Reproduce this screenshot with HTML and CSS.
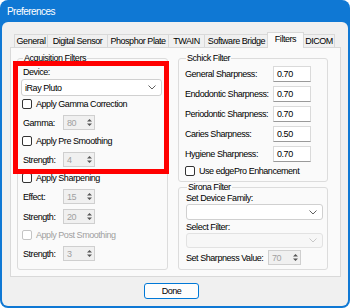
FILE: index.html
```html
<!DOCTYPE html>
<html>
<head>
<meta charset="utf-8">
<title>Preferences</title>
<link rel="stylesheet" href="styles.css">
</head>
<body>
<div class="window">
  <div class="titlebar">Preferences</div>
  <div class="client">
    <div class="tabstrip">
      <div class="tab t1">General</div>
      <div class="tab t2">Digital Sensor</div>
      <div class="tab t3">Phosphor Plate</div>
      <div class="tab t4">TWAIN</div>
      <div class="tab t5">Software Bridge</div>
      <div class="tab sel">Filters</div>
      <div class="tab t7">DICOM</div>
    </div>
    <div class="panel">
      <fieldset class="group acq">
        <legend>Acquisition Filters</legend>
        <div class="stack">
          <div class="devblock">
            <div class="lbl">Device:</div>
            <div class="combo"><span>iRay Pluto</span><svg class="chev" width="8" height="5" viewBox="0 0 8 5"><path d="M0.5 0.5L4 4 7.5 0.5" fill="none" stroke="#606060" stroke-width="1"/></svg></div>
          </div>
          <div class="chk"><span class="box"></span>Apply Gamma Correction</div>
          <div class="row"><span class="lbl rl">Gamma:</span><div class="spin"><span>80</span><svg width="9" height="13" viewBox="0 0 9 13"><path d="M2 5.5L4.5 3 7 5.5z M2 7.5L4.5 10 7 7.5z" fill="#555"/></svg></div></div>
          <div class="chk"><span class="box"></span>Apply Pre Smoothing</div>
          <div class="row"><span class="lbl rl">Strength:</span><div class="spin"><span>4</span><svg width="9" height="13" viewBox="0 0 9 13"><path d="M2 5.5L4.5 3 7 5.5z M2 7.5L4.5 10 7 7.5z" fill="#555"/></svg></div></div>
          <div class="chk"><span class="box"></span>Apply Sharpening</div>
          <div class="row"><span class="lbl rl">Effect:</span><div class="spin"><span>15</span><svg width="9" height="13" viewBox="0 0 9 13"><path d="M2 5.5L4.5 3 7 5.5z M2 7.5L4.5 10 7 7.5z" fill="#555"/></svg></div></div>
          <div class="row"><span class="lbl rl">Strength:</span><div class="spin"><span>20</span><svg width="9" height="13" viewBox="0 0 9 13"><path d="M2 5.5L4.5 3 7 5.5z M2 7.5L4.5 10 7 7.5z" fill="#555"/></svg></div></div>
          <div class="chk dis"><span class="box"></span>Apply Post Smoothing</div>
          <div class="row"><span class="lbl rl">Strength:</span><div class="spin"><span>3</span><svg width="9" height="13" viewBox="0 0 9 13"><path d="M2 5.5L4.5 3 7 5.5z M2 7.5L4.5 10 7 7.5z" fill="#555"/></svg></div></div>
        </div>
      </fieldset>
      <div class="rightcol">
        <fieldset class="group schick">
          <legend>Schick Filter</legend>
          <div class="sstack">
            <div class="trow"><span class="tl">General Sharpness:</span><span class="tb">0.70</span></div>
            <div class="trow"><span class="tl">Endodontic Sharpness:</span><span class="tb">0.70</span></div>
            <div class="trow"><span class="tl">Periodontic Sharpness:</span><span class="tb">0.70</span></div>
            <div class="trow"><span class="tl">Caries Sharpness:</span><span class="tb">0.50</span></div>
            <div class="trow"><span class="tl">Hygiene Sharpness:</span><span class="tb">0.70</span></div>
            <div class="chk edge"><span class="box"></span>Use edgePro Enhancement</div>
          </div>
        </fieldset>
        <fieldset class="group sirona">
          <legend>Sirona Filter</legend>
          <div class="slbl">Set Device Family:</div>
          <div class="combo wide"><span></span><svg class="chev" width="8" height="5" viewBox="0 0 8 5"><path d="M0.5 0.5L4 4 7.5 0.5" fill="none" stroke="#606060" stroke-width="1"/></svg></div>
          <div class="slbl gap">Select Filter:</div>
          <div class="combo wide off"><span></span><svg class="chev" width="8" height="5" viewBox="0 0 8 5"><path d="M0.5 0.5L4 4 7.5 0.5" fill="none" stroke="#c8c8c8" stroke-width="1"/></svg></div>
          <div class="row srow"><span class="lbl sl">Set Sharpness Value:</span><div class="spin"><span>70</span><svg width="9" height="13" viewBox="0 0 9 13"><path d="M2 5.5L4.5 3 7 5.5z M2 7.5L4.5 10 7 7.5z" fill="#555"/></svg></div></div>
        </fieldset>
      </div>
    </div>
    <div class="footer"><button class="btn">Done</button></div>
  </div>
  <div class="annot"></div>
</div>
</body>
</html>
```

FILE: styles.css
```css
body {
  margin: 0;
  background: #ffffff;
  font-family: "Liberation Sans", Arial, sans-serif;
  font-size: 9px;
  letter-spacing: -0.45px;
  color: #000;
}

.window {
  position: relative;
  width: 350px;
  height: 308px;
  background: #0f78d4;
  border-radius: 8px;
  display: flex;
  flex-direction: column;
  overflow: hidden;
}

.titlebar {
  box-sizing: border-box;
  height: 22px;
  flex: none;
  padding: 2px 0 0 7px;
  color: #fff;
  font-size: 10px;
  letter-spacing: -0.55px;
  line-height: 20px;
}

.client {
  flex: 1;
  margin: 0 2px 2px;
  background: #f0f0f0;
  border-radius: 6px;
  padding: 10px 7px 0 8px;
  display: flex;
  flex-direction: column;
}

.tabstrip {
  display: flex;
  align-items: flex-end;
  height: 15px;
  padding-left: 4px;
  flex: none;
}

.tab {
  box-sizing: border-box;
  height: 13px;
  border: 1px solid #d9d9d9;
  border-bottom: 0;
  margin-right: -1px;
  background: #f0f0f0;
  line-height: 12px;
  white-space: nowrap;
  text-align: center;
  flex: none;
}

.t1 { width: 34px; }
.t2 { width: 61px; }
.t3 { width: 62px; }
.t4 { width: 37px; }
.t5 { width: 65px; }
.t7 { width: 32px; }

.tab.sel {
  width: 37px;
  height: 16px;
  margin: 0 -1px -1px -1px;
  position: relative;
  z-index: 1;
  background: #fafafa;
  line-height: 13px;
}

.panel {
  box-sizing: border-box;
  height: 230px;
  flex: none;
  border: 1px solid #d9d9d9;
  background: #fafafa;
  padding: 5px 12px 6px 6px;
  display: grid;
  grid-template-columns: 151px 150px;
  column-gap: 10px;
}

.group {
  margin: 0;
  border: 1px solid #dcdcdc;
  border-radius: 3px;
  min-width: 0;
}

.group legend {
  padding: 0 1px;
  margin-left: 1px;
  line-height: 11px;
  height: 11px;
}

.acq {
  padding: 2px 4px 0 4px;
}

.stack {
  display: flex;
  flex-direction: column;
  gap: 5px;
}

.devblock {
  margin-bottom: -3px;
}

.lbl {
  line-height: 12px;
  height: 12px;
  padding-left: 1px;
  white-space: nowrap;
}

.combo {
  box-sizing: border-box;
  height: 17px;
  margin-top: 1px;
  margin-left: -1px;
  width: 141px;
  background: #fff;
  border: 1px solid #d0d0d0;
  border-radius: 3px;
  display: flex;
  align-items: center;
  justify-content: space-between;
  padding: 0 5px 0 3px;
}

.chk {
  display: flex;
  align-items: center;
  height: 12px;
  white-space: nowrap;
}

.box {
  box-sizing: border-box;
  width: 10px;
  height: 10px;
  border: 1px solid #333;
  border-radius: 2px;
  background: #fff;
  margin-right: 4px;
  flex: none;
}

.chk.dis {
  color: #a0a0a0;
}

.chk.dis .box {
  border-color: #c4c4c4;
}

.row {
  display: flex;
  align-items: center;
  height: 15px;
}

.rl {
  width: 41px;
  flex: none;
  box-sizing: border-box;
}

.spin {
  box-sizing: border-box;
  width: 32px;
  height: 15px;
  border: 1px solid #cfcfcf;
  background: #f0f0f0;
  display: flex;
  align-items: center;
  justify-content: space-between;
  color: #a0a0a0;
  padding-left: 3px;
}

.rightcol {
  display: flex;
  flex-direction: column;
}

.schick {
  padding: 2px 4px 4px 6px;
}

.sstack {
  display: flex;
  flex-direction: column;
  gap: 4px;
}

.trow {
  display: flex;
  align-items: center;
  height: 16px;
}

.tl {
  width: 88px;
  flex: none;
  white-space: nowrap;
}

.tb {
  box-sizing: border-box;
  width: 38px;
  height: 16px;
  background: #fff;
  border: 1px solid #dadada;
  border-bottom-color: #9a9a9a;
  padding-left: 3px;
  line-height: 14px;
}

.chk.edge {
  margin-top: -1px;
}

.sirona {
  flex: 1;
  padding: 0 4px 3px 7px;
}

.slbl {
  line-height: 11px;
  height: 11px;
  white-space: nowrap;
}

.slbl.gap {
  margin-top: 2px;
}

.combo.wide {
  width: 137px;
  height: 16px;
  margin: 0;
}

.combo.off {
  height: 15px;
  background: #f7f7f7;
  border-color: #e2e2e2;
}

.srow {
  margin-top: 2px;
}

.sl {
  width: 82px;
  flex: none;
  padding-left: 0;
}

.srow .spin {
  width: 33px;
}

.footer {
  flex: 1;
  display: flex;
  justify-content: center;
  align-items: flex-start;
  padding: 6px 8px 0 0;
}

.btn {
  box-sizing: border-box;
  width: 55px;
  height: 16px;
  border: 1px solid #0078d7;
  border-radius: 3px;
  background: #fdfdfd;
  font: inherit;
  letter-spacing: inherit;
  color: #000;
  padding: 0;
  line-height: 14px;
}

.annot {
  position: absolute;
  left: 13px;
  top: 61px;
  width: 156px;
  height: 113px;
  box-sizing: border-box;
  border: 5px solid #ff0000;
  pointer-events: none;
}
```
